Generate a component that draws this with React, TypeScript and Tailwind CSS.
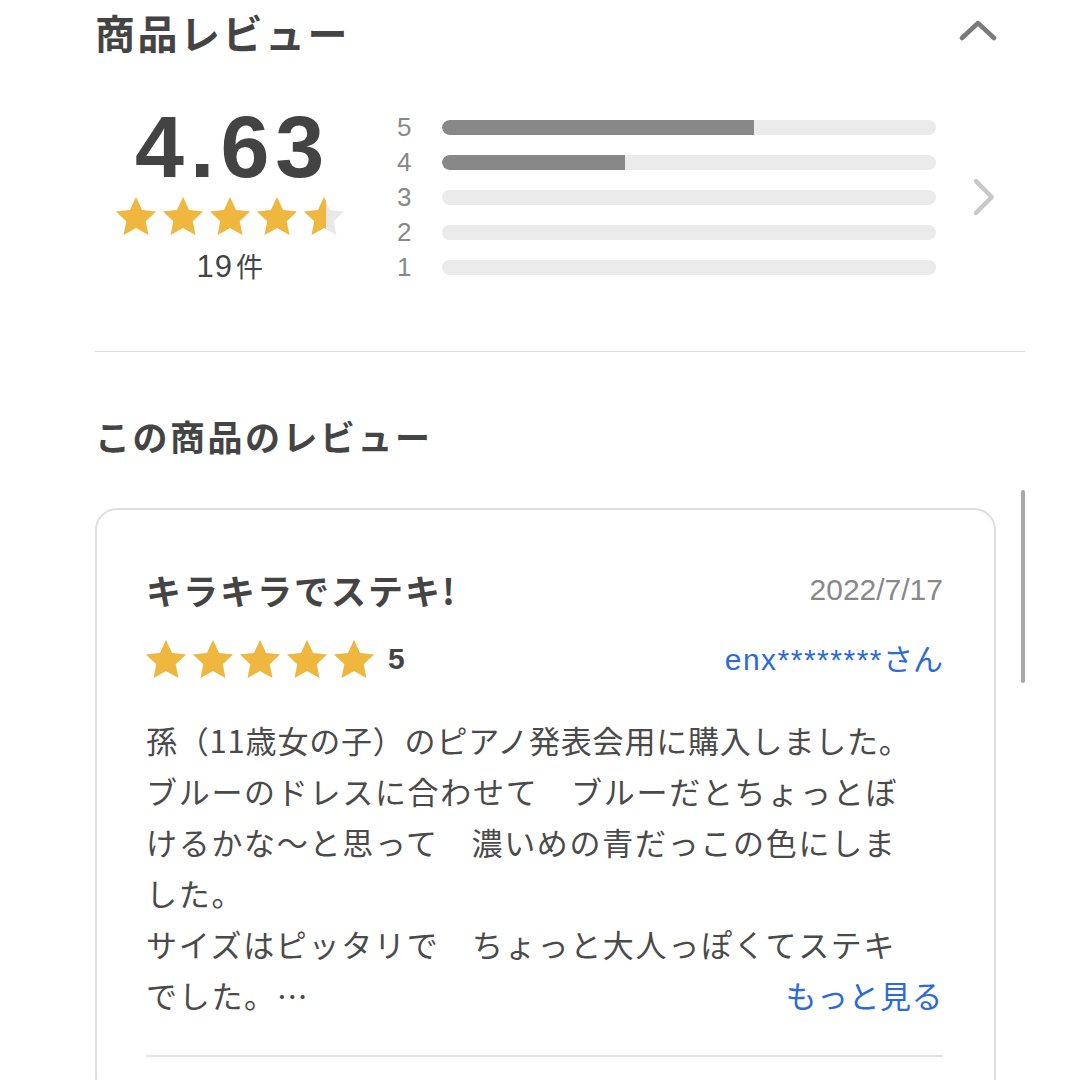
import React from "react";

const STAR = "M12 1.5l3.09 6.63 7.16.83-5.3 4.9 1.43 7.07L12 17.35l-6.38 3.58 1.43-7.07-5.3-4.9 7.16-.83z";

function Star({ fill = 1 }: { fill?: number }) {
  const id = React.useId();
  return (
    <svg width="40" height="38" viewBox="1.75 1.5 20.5 19.45" className="block">
      <defs>
        <clipPath id={id}>
          <rect x="0" y="0" width={1.75 + 20.5 * fill} height="23" />
        </clipPath>
      </defs>
      <path d={STAR} fill="#e8e8e8" />
      <path d={STAR} fill="#efb73e" clipPath={`url(#${id})`} />
    </svg>
  );
}

const bars = [
  { n: 5, p: 63.2 },
  { n: 4, p: 37 },
  { n: 3, p: 0 },
  { n: 2, p: 0 },
  { n: 1, p: 0 },
];

const lines = [
  { t: "孫（11歳女の子）のピアノ発表会用に購入しました。", c: "tracking-[0.8px]" },
  { t: "ブルーのドレスに合わせて　ブルーだとちょっとぼ", c: "tracking-[1.7px]" },
  { t: "けるかな〜と思って　濃いめの青だっこの色にしま", c: "tracking-[1.7px]" },
  { t: "した。", c: "tracking-[1.7px]" },
  { t: "サイズはピッタリで　ちょっと大人っぽくてステキ", c: "tracking-[1.7px]" },
];

const jp = "font-['Noto_Sans_CJK_JP','Noto_Sans',sans-serif]";
const lat = "font-['Liberation_Sans','Noto_Sans_CJK_JP',sans-serif]";

export default function App() {
  return (
    <div className={`relative w-[1080px] h-[1080px] overflow-hidden bg-white ${jp}`}>
      <div className="pl-[95px]">
        {/* header */}
        <div className="flex w-[902px] items-center justify-between pt-[10px]">
          <h1 className="text-[40px] leading-[44px] font-bold text-[#444] tracking-[2.5px]">商品レビュー</h1>
          <svg width="38" height="22" viewBox="0 0 38 22" className="mt-[-4px]">
            <path d="M3 19 L19 4 L35 19" fill="none" stroke="#7a7a7a" strokeWidth="4.5" strokeLinecap="round" strokeLinejoin="round" />
          </svg>
        </div>

        {/* summary */}
        <div className="mt-[49px] flex w-[902px] items-start">
          <div className="flex w-[272px] flex-col items-center">
            <div className={`${lat} text-[88px] leading-[88px] font-bold text-[#434343] tracking-[6px] pl-[6px]`}>4.63</div>
            <div className="mt-[6px] flex gap-[7px]">
              <Star />
              <Star />
              <Star />
              <Star />
              <Star fill={0.55} />
            </div>
            <div className="mt-[14px] flex items-baseline text-[#444]">
              <span className={`${lat} text-[31px] leading-[34px] tracking-[1px]`}>19</span>
              <span className="text-[27px] leading-[34px] ml-[3px]">件</span>
            </div>
          </div>
          <div className="mt-[12px] ml-[30px] flex flex-col gap-[11px]">
            {bars.map((b) => (
              <div key={b.n} className="flex h-[24px] items-center">
                <span className={`${lat} w-[20px] text-center text-[26px] leading-[24px] text-[#888]`}>{b.n}</span>
                <div className="ml-[28px] h-[15px] w-[494px] overflow-hidden rounded-full bg-[#ebebeb]">
                  <div className="h-full rounded-l-full bg-[#888888]" style={{ width: `${b.p}%` }} />
                </div>
              </div>
            ))}
          </div>
          <svg width="26" height="40" viewBox="0 0 26 40" className="ml-[35px] mt-[74px]">
            <path d="M5 4 L21 20 L5 36" fill="none" stroke="#c8c8c8" strokeWidth="4.5" strokeLinecap="round" strokeLinejoin="round" />
          </svg>
        </div>

        {/* divider */}
        <div className="mt-[67px] h-px w-[930px] bg-[#dcdcdc]" />

        {/* subtitle */}
        <h2 className="mt-[64px] text-[35px] leading-[40px] font-bold text-[#444] tracking-[2.5px]">この商品のレビュー</h2>

        {/* card */}
        <div className="mt-[52px] w-[901px] rounded-[22px] border-2 border-[#dedede] pl-[49px] pr-[51px] pt-[60px] pb-[40px]">
          <div className="flex items-center justify-between">
            <div className="text-[35px] leading-[40px] font-bold text-[#444] tracking-[2px]">キラキラでステキ!</div>
            <div className={`${lat} text-[30px] leading-[40px] text-[#888]`}>2022/7/17</div>
          </div>
          <div className="mt-[28px] flex items-center justify-between">
            <div className="flex items-center">
              <div className="flex gap-[7px]">
                <Star />
                <Star />
                <Star />
                <Star />
                <Star />
              </div>
              <span className={`${lat} ml-[14px] text-[30px] leading-[38px] font-bold text-[#444]`}>5</span>
            </div>
            <div className="text-[30px] leading-[38px] text-[#2b6bd8]">
              <span className={`${lat} tracking-[1.5px]`}>enx********</span>さん
            </div>
          </div>
          <div className="mt-[35px] text-[31px] leading-[51px] text-[#4a4a4a]">
            {lines.map((l, i) => (
              <div key={i} className={`whitespace-nowrap ${l.c}`}>{l.t}</div>
            ))}
            <div className="flex justify-between whitespace-nowrap">
              <span className="tracking-[1.7px]">でした。…</span>
              <span className="text-[#2b6bd8] tracking-[0.5px]">もっと見る</span>
            </div>
          </div>
          <div className="mt-[35px] h-[2px] w-full bg-[#e2e2e2]" />
        </div>
      </div>

      {/* scrollbar */}
      <div className="absolute left-[1021px] top-[490px] h-[193px] w-[4px] rounded-full bg-[#a8a8a8]" />
    </div>
  );
}
